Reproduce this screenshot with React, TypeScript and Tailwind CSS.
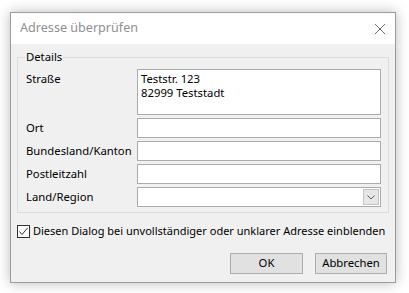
const font = { fontFamily: '"Noto Sans", "Open Sans", sans-serif' };

const Field = ({ label }: { label: string }) => (
  <>
    <div className="flex items-center h-[20px] text-[11.3px] text-black">{label}</div>
    <div className="h-[20px] border border-[#ababab] bg-white" />
  </>
);

export default function App() {
  return (
    <div className="w-[409px] h-[293px] bg-white overflow-hidden pt-[12px] pl-[10px]" style={font}>
      <div className="w-[386px] h-[271px] border border-[#9c9c9c] bg-[#f0f0f0] flex flex-col shadow-[0_0_12px_rgba(0,0,0,0.28)]">
        {/* Title bar */}
        <div className="h-[31px] bg-white flex items-center justify-between pl-[9px] pr-[8px]">
          <span className="text-[12.6px] text-[#8f8f8f] leading-none">Adresse überprüfen</span>
          <svg width="12" height="12" viewBox="0 0 12 12" className="mr-[1px]">
            <path d="M1 1 L11 11 M11 1 L1 11" stroke="#6f6f6f" strokeWidth="1" />
          </svg>
        </div>

        {/* Body */}
        <div className="flex-1 flex flex-col px-[6px]">
          <fieldset className="mt-[5px] border border-[#dcdcdc] pl-[8px] pr-[7px] pt-[4px] pb-[5px]">
            <legend className="-ml-[1px] px-[1px] text-[11.3px] leading-[16px] text-black">Details</legend>
            <div className="grid grid-cols-[111px_1fr] gap-y-[3px]">
              <div className="text-[11.3px] leading-[16px] pt-[2px] text-black">Straße</div>
              <div className="h-[46px] border border-[#ababab] bg-white px-[3px] pt-[2px] text-[11.3px] leading-[14px] text-black">
                <div>Teststr. 123</div>
                <div>82999 Teststadt</div>
              </div>
              <Field label="Ort" />
              <Field label="Bundesland/Kanton" />
              <Field label="Postleitzahl" />
              <div className="flex items-center h-[20px] text-[11.3px] text-black">Land/Region</div>
              <div className="h-[20px] border border-[#ababab] bg-white flex justify-end items-center pr-[1px]">
                <div className="w-[16px] h-[16px] bg-[#e6e6e6] border border-[#c4c4c4] flex items-center justify-center">
                  <svg width="8" height="5" viewBox="0 0 8 5">
                    <path d="M0.5 0.5 L4 4 L7.5 0.5" fill="none" stroke="#606060" strokeWidth="1" />
                  </svg>
                </div>
              </div>
            </div>
          </fieldset>

          <label className="mt-[11px] flex items-center gap-[3px] h-[14px]">
            <span className="w-[13px] h-[13px] border border-[#333] bg-white flex items-center justify-center">
              <svg width="11" height="11" viewBox="0 0 11 11">
                <path d="M1.5 5.5 L4 8.5 L9.5 2" fill="none" stroke="#333" strokeWidth="1" />
              </svg>
            </span>
            <span className="text-[11px] text-black whitespace-nowrap">
              Diesen Dialog bei unvollständiger oder unklarer Adresse einblenden
            </span>
          </label>

          <div className="mt-[15px] flex justify-end gap-[12px] pr-[2px]">
            <button className="w-[73px] h-[21px] bg-[#e1e1e1] border border-[#adadad] text-[11.3px] text-black">OK</button>
            <button className="w-[72px] h-[21px] bg-[#e1e1e1] border border-[#adadad] text-[11.3px] text-black">Abbrechen</button>
          </div>
        </div>
      </div>
    </div>
  );
}
